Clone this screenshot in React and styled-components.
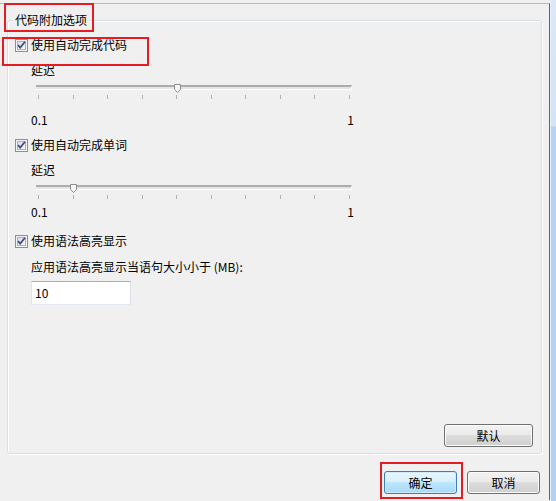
import styled, { createGlobalStyle } from 'styled-components';

const GlobalStyle = createGlobalStyle`
  html, body {
    margin: 0;
    padding: 0;
    background: #f0f0f0;
  }
  body {
    font-family: "Noto Sans CJK SC", "Noto Sans", sans-serif;
    font-size: 12px;
    color: #000;
  }
`;

const Screen = styled.div`
  position: relative;
  display: flex;
  width: 556px;
  height: 501px;
  overflow: hidden;
  background: #f0f0f0;
`;

const Main = styled.div`
  display: flex;
  flex-direction: column;
  width: 550px;
  height: 497px;
  margin-top: 3px;
  box-sizing: border-box;
  border-top: 1px solid #b4bac2;
  border-right: 1px solid #5d6672;
`;

const Frame = styled.div`
  flex: 1;
  background: linear-gradient(#dae8f7 0, #d3e4f6 126px, #b6d3f3 127px, #b3d1f3 100%);
  border-left: 1px solid #e9f1fa;
`;

const GroupBox = styled.div`
  display: flex;
  flex-direction: column;
  box-sizing: border-box;
  width: 535px;
  height: 434px;
  margin: 16px 0 0 7px;
  border: 1px solid #d5dfe5;
  border-radius: 3px;
  box-shadow: 1px 1px 0 #fff, inset 1px 1px 0 #fff;
  padding: 0 8px 6px 7px;
`;

const Legend = styled.div`
  align-self: flex-start;
  margin: -8px 0 0 -2px;
  padding: 0 2px;
  line-height: 14px;
  background: #f0f0f0;
`;

const CheckRow = styled.label`
  display: flex;
  align-items: center;
  gap: 3px;
  height: 16px;
  margin-top: ${(p) => p.$top}px;
  line-height: 16px;
`;

const Box = styled.span`
  display: inline-flex;
  width: 13px;
  height: 13px;
`;

const Indent = styled.div`
  display: flex;
  flex-direction: column;
  padding-left: 16px;
  margin-top: ${(p) => p.$top || 0}px;
`;

const Text = styled.div`
  line-height: 16px;
  height: 16px;
  margin-top: ${(p) => p.$top || 0}px;
`;

const SliderWrap = styled.div`
  position: relative;
  width: 316px;
  margin: ${(p) => p.$top}px 0 0 5px;
`;

const Track = styled.div`
  height: 5px;
  box-sizing: border-box;
  border-top: 2px solid #acacac;
  border-bottom: 1px solid #fff;
  border-right: 1px solid #fff;
  background: #e3e6e6;
`;

const Ticks = styled.div`
  display: flex;
  justify-content: space-between;
  padding: 0 2px;
  margin-top: 5px;
  height: 4px;
`;

const Tick = styled.span`
  width: 1px;
  height: 4px;
  background: #b0b0b0;
`;

const Thumb = styled.svg`
  position: absolute;
  top: -1px;
  width: 7px;
  height: 9px;
`;

const RangeRow = styled.div`
  display: flex;
  justify-content: space-between;
  width: 323px;
  line-height: 16px;
  margin-top: ${(p) => p.$top}px;
`;

const Field = styled.div`
  box-sizing: border-box;
  width: 100px;
  height: 24px;
  margin-top: 6px;
  padding: 0 0 0 3px;
  line-height: 22px;
  background: #fff;
  border: 1px solid #e3e9ef;
  border-top-color: #abadb3;
  border-left-color: #e2e3ea;
  border-right-color: #dbdfe6;
`;

const Button = styled.button`
  box-sizing: border-box;
  width: ${(p) => p.$w}px;
  height: 23px;
  padding: 0;
  font-family: inherit;
  font-size: 12px;
  color: #000;
  border-radius: 3px;
  border: 1px solid ${(p) => (p.$primary ? '#3c7fb1' : '#707070')};
  background: ${(p) =>
    p.$primary
      ? 'linear-gradient(#eaf6fd 0%, #d9f0fc 45%, #bee6fd 50%, #a7d9f5 100%)'
      : 'linear-gradient(#f2f2f2 0%, #ebebeb 45%, #dddddd 50%, #cfcfcf 100%)'};
  box-shadow: inset 0 0 0 1px ${(p) => (p.$primary ? '#cfeafb' : '#fcfcfc')};
`;

const GroupFooter = styled.div`
  display: flex;
  justify-content: flex-end;
  margin-top: auto;
`;

const DialogButtons = styled.div`
  display: flex;
  justify-content: flex-end;
  gap: 10px;
  margin-top: 17px;
  padding-right: 9px;
`;

const Mark = styled.div`
  position: absolute;
  left: ${(p) => p.$x}px;
  top: ${(p) => p.$y}px;
  width: ${(p) => p.$w}px;
  height: ${(p) => p.$h}px;
  box-sizing: border-box;
  border: 2px solid #e51c23;
  pointer-events: none;
`;

function CheckBox() {
  return (
    <Box>
      <svg width="13" height="13" viewBox="0 0 13 13">
        <defs>
          <linearGradient id="cbg" x1="0" y1="0" x2="1" y2="1">
            <stop offset="0" stopColor="#dcdcdc" />
            <stop offset="1" stopColor="#fbfbfb" />
          </linearGradient>
        </defs>
        <rect x="0.5" y="0.5" width="12" height="12" fill="#f4f4f4" stroke="#8f8f8f" />
        <rect x="2.5" y="2.5" width="8" height="8" fill="url(#cbg)" stroke="#aeb3b9" />
        <path d="M3 6.2 L5.2 8.6 L10 2.8" fill="none" stroke="#3a4f8c" strokeWidth="1.8" />
      </svg>
    </Box>
  );
}

function Slider({ value, top }) {
  const ticks = Array.from({ length: 10 });
  const left = 2 + (value * 312) / 9 - 3;
  return (
    <SliderWrap $top={top}>
      <Track />
      <Ticks>
        {ticks.map((_, i) => (
          <Tick key={i} />
        ))}
      </Ticks>
      <Thumb style={{ left }} viewBox="0 0 7 9">
        <path d="M0.5 0.5 H6.5 V5.5 L3.5 8.5 L0.5 5.5 Z" fill="#f4f4f4" stroke="#8a8a8a" />
        <path d="M1.5 1.5 H5.5" stroke="#ffffff" />
      </Thumb>
    </SliderWrap>
  );
}

export default function App() {
  return (
    <>
      <GlobalStyle />
      <Screen>
        <Main>
          <GroupBox>
            <Legend>代码附加选项</Legend>

            <CheckRow $top={10}>
              <CheckBox />
              使用自动完成代码
            </CheckRow>
            <Indent>
              <Text $top={9}>延迟</Text>
              <Slider value={4} top={7} />
              <RangeRow $top={13}>
                <span>0.1</span>
                <span>1</span>
              </RangeRow>
            </Indent>

            <CheckRow $top={9}>
              <CheckBox />
              使用自动完成单词
            </CheckRow>
            <Indent>
              <Text $top={9}>延迟</Text>
              <Slider value={1} top={7} />
              <RangeRow $top={5}>
                <span>0.1</span>
                <span>1</span>
              </RangeRow>
            </Indent>

            <CheckRow $top={13}>
              <CheckBox />
              使用语法高亮显示
            </CheckRow>
            <Indent>
              <Text $top={10}>应用语法高亮显示当语句大小小于 (MB):</Text>
              <Field>10</Field>
            </Indent>

            <GroupFooter>
              <Button $w={89}>默认</Button>
            </GroupFooter>
          </GroupBox>

          <DialogButtons>
            <Button $w={73} $primary>
              确定
            </Button>
            <Button $w={73}>取消</Button>
          </DialogButtons>
        </Main>
        <Frame />

        <Mark $x={4} $y={3} $w={90} $h={29} />
        <Mark $x={2} $y={37} $w={147} $h={29} />
        <Mark $x={380} $y={462} $w={83} $h={37} />
      </Screen>
    </>
  );
}
